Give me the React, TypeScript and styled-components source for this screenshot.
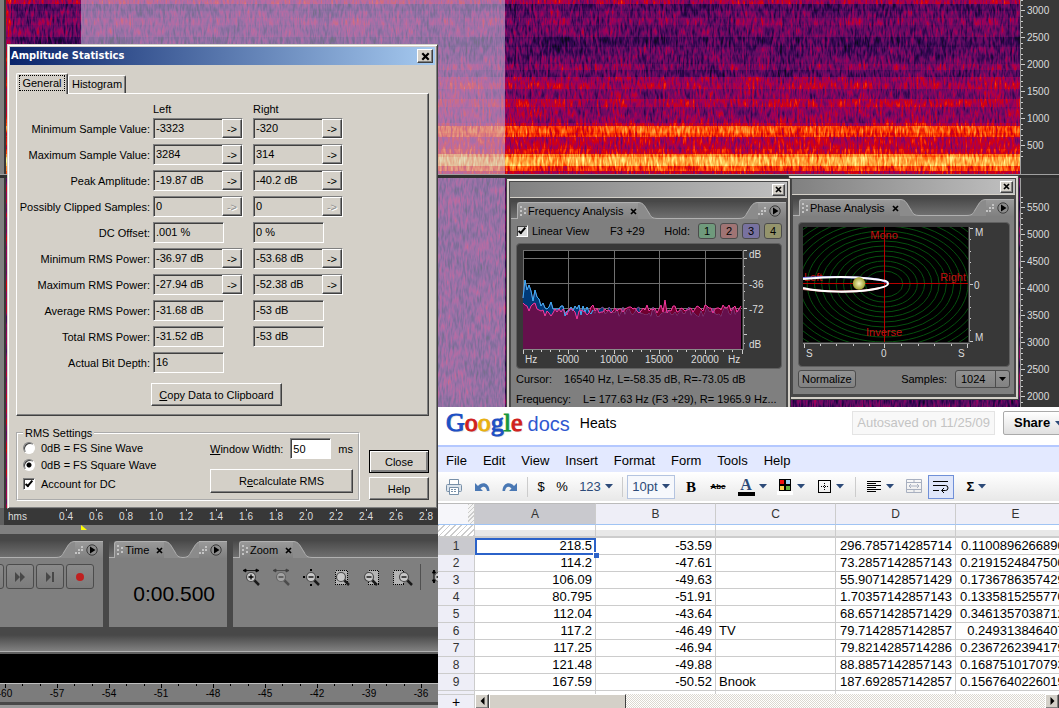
import React from "react";
import styled, { createGlobalStyle, css } from "styled-components";

const Global = createGlobalStyle`
  *, *::before, *::after { box-sizing: border-box; }
  body { margin: 0; background: #484848; font-family: "Liberation Sans", Arial, sans-serif; }
  button, input, select { font: inherit; color: inherit; margin: 0; border-radius: 0; }
`;

const uiFont = css`
  font-family: "Liberation Sans", Arial, sans-serif;
  font-size: 11px;
  line-height: 14px;
`;
const raised = css`
  border: 1px solid;
  border-color: #fff #404040 #404040 #fff;
  box-shadow: inset -1px -1px 0 #808080;
`;
const sunken = css`
  border: 1px solid;
  border-color: #808080 #fff #fff #808080;
  box-shadow: inset 1px 1px 0 #404040;
`;

/* ---------- Audio editor ---------- */

const Desktop = styled.div`
  position: relative;
  height: 100vh;
  overflow: hidden;
  ${uiFont}
`;
const Editor = styled.main`
  display: flex;
  flex-direction: column;
  min-height: 100%;
`;
const Track = styled.section<{ $h: number }>`
  display: flex;
  height: ${(p) => p.$h}px;
  background: #383838;
  border-left: 4px solid #808080;
  padding-left: 2px;
  overflow: hidden;
`;
const Wave = styled.div`
  position: relative;
  flex: 1;
  border-right: 1px solid #a0a0a0;
  svg { display: block; }
`;
const Selection = styled.div`
  position: absolute;
  left: 75px;
  width: 424px;
  top: 0;
  bottom: 0;
  background: rgba(205, 200, 225, 0.54);
`;
const TrackGap = styled.div`
  height: 4px;
  background: #303030;
  border-top: 1px solid #a0a0a0;
`;
const Scale = styled.div<{ $end?: boolean; $pad: number }>`
  display: flex;
  width: 38px;
  flex-direction: column;
  justify-content: ${(p) => (p.$end ? "flex-end" : "flex-start")};
  padding: ${(p) => (p.$end ? `0 0 ${p.$pad}px` : `${p.$pad}px 0 0`)};
  color: #ddd;
`;
const ScaleMark = styled.span`
  display: flex;
  flex: none;
  align-items: center;
  gap: 2px;
  height: 27px;
  font-size: 10px;
`;

function Mark({ value }: { value: number }) {
  return (
    <ScaleMark>
      <svg width="4" height="27" stroke="#ccc" shapeRendering="crispEdges">
        <path d="M0 3.5h2M0 8.5h2M0 13.5h4M0 19.5h2M0 24.5h2" />
      </svg>
      {value}
    </ScaleMark>
  );
}

const TOP_BANDS: [number, number, number][] = [
  [0, 4, 0.42], [4, 7, 0.24], [11, 7, 0.29], [18, 7, 0.34], [25, 6, 0.3], [31, 6, 0.31],
  [37, 10, 0.22], [47, 9, 0.27], [56, 8, 0.29], [64, 6, 0.35], [70, 7, 0.27], [77, 6, 0.4],
  [83, 6, 0.43], [89, 10, 0.34], [99, 8, 0.45], [107, 8, 0.37], [115, 8, 0.38], [123, 3, 0.48],
  [126, 7, 0.69], [133, 4, 0.64], [137, 12, 0.47], [149, 5, 0.53], [154, 3, 0.76], [157, 9, 0.85],
  [166, 5, 0.65], [171, 3, 0.48],
];
const LOW_BANDS: [number, number, number][] = [[0, 220, 0.27], [220, 110, 0.25]];

function Spectrogram({ id, bands, height, seed }: { id: string; bands: [number, number, number][]; height: number; seed: number }) {
  return (
    <svg width="100%" height={height} aria-label="Spectrogram">
      <defs>
        <filter id={id} x="0" y="0" width="100%" height="100%" colorInterpolationFilters="sRGB">
          <feTurbulence type="fractalNoise" baseFrequency="0.47 0.11" numOctaves={2} seed={seed} />
          <feColorMatrix values="1 0 0 0 0  1 0 0 0 0  1 0 0 0 0  0 0 0 0 1" result="grain" />
          <feTurbulence type="fractalNoise" baseFrequency="0.03 0.05" numOctaves={2} seed={seed + 4} />
          <feColorMatrix values="1 0 0 0 0  1 0 0 0 0  1 0 0 0 0  0 0 0 0 1" result="cloud" />
          <feComposite in="SourceGraphic" in2="grain" operator="arithmetic" k2={1} k3={0.54} k4={-0.29} result="a" />
          <feComposite in="a" in2="cloud" operator="arithmetic" k2={1} k3={0.22} k4={-0.13} />
          <feComponentTransfer>
            <feFuncR type="table" tableValues="0.04 0.17 0.38 0.62 0.84 1 1 1 1" />
            <feFuncG type="table" tableValues="0.04 0.02 0.05 0 0 0.25 0.55 0.8 1" />
            <feFuncB type="table" tableValues="0.1 0.3 0.39 0.36 0.05 0 0.16 0.36 0.6" />
          </feComponentTransfer>
        </filter>
      </defs>
      <g filter={`url(#${id})`}>
        {bands.map(([y, h, v]) => (
          <rect key={y} x="0" y={y} width="100%" height={h} fill={`rgb(${v * 255},${v * 255},${v * 255})`} />
        ))}
        <rect x="0" y="0" width="5" height={height} fill="#fff" fillOpacity="0.2" />
      </g>
    </svg>
  );
}

const Ruler = styled.div`
  display: flex;
  height: 17px;
  padding-left: 4px;
  background: #383838;
  border-left: 4px solid #606060;
  color: #ddd;
  font-size: 10px;
  line-height: 18px;
`;
const RulerUnit = styled.span`
  width: 43px;
`;
const RulerCell = styled.span`
  width: 30px;
  text-align: center;
  background: linear-gradient(#ccc, #ccc) 15px 0 / 1px 3px no-repeat;
`;
const CursorStrip = styled.div`
  height: 9px;
  padding-left: 81px;
  background: #808080;
  svg { display: block; }
`;
const Dock = styled.div`
  display: flex;
  gap: 6px;
  padding-top: 7px;
  background: #484848;
`;
const DockPanel = styled.section<{ $w?: number }>`
  display: flex;
  flex-direction: column;
  height: 86px;
  ${(p) => (p.$w ? `width: ${p.$w}px;` : "flex: 1;")}
  background: #7f7f7f;
`;
const Head = styled.header`
  display: flex;
  height: 17px;
  flex: none;
  background: linear-gradient(#4a4a4a, #727272);
`;
const HeadEdge = styled.span<{ $w?: number }>`
  ${(p) => (p.$w ? `width: ${p.$w}px;` : "flex: 1;")}
  border-bottom: 1px solid #b0b0b0;
`;
const Tab = styled.span`
  display: flex;
  align-items: center;
  gap: 1px;
  padding: 0 0 0 2px;
  background: linear-gradient(#999, #808080);
  border-top: 1px solid #b0b0b0;
  border-left: 1px solid #b0b0b0;
  border-top-left-radius: 3px;
  color: #000;
  white-space: nowrap;
`;
const IconButton = styled.button`
  display: flex;
  align-items: center;
  justify-content: center;
  padding: 0;
  border: 0;
  background: none;
`;
const CloseX = styled(IconButton)`
  width: 9px;
  margin-left: 5px;
`;
const MenuTab = styled(Tab)`
  padding: 0 5px 0 0;
  border-left: 0;
  border-radius: 0;
`;

const Grip = () => (
  <svg width="7" height="12" fill="#c4c4c4">
    <path d="M0 1h2v2H0zM0 5h2v2H0zM0 9h2v2H0zM4 3h2v2H4zM4 7h2v2H4z" />
  </svg>
);
const Slope = ({ flip }: { flip?: boolean }) => (
  <svg width="20" height="17">
    <g transform={flip ? "translate(20 0) scale(-1 1)" : undefined}>
      <path d="M0 .5C6 .5 7 5 11 11c2 4 3 5.500 9 5.500V17H0z" fill="#8b8b8b" />
      <path d="M0 .5C6 .5 7 5 11 11c2 4 3 5.500 9 5.500" fill="none" stroke="#b0b0b0" />
    </g>
  </svg>
);
const X = ({ size = 7 }: { size?: number }) => (
  <svg width={size} height={size} viewBox="0 0 7 7" stroke="#000" strokeWidth="1.700">
    <path d="M1 1l5 5M6 1L1 6" />
  </svg>
);

function PanelHead({ title }: { title?: string }) {
  return (
    <Head>
      {title && (
        <>
          <HeadEdge $w={6} />
          <Tab>
            <Grip />
            {title}
            <CloseX aria-label={`Close ${title}`}><X /></CloseX>
          </Tab>
          <Slope />
        </>
      )}
      <HeadEdge />
      <Slope flip />
      <MenuTab>
        <svg width="10" height="9" fill="#c4c4c4">
          <path d="M0 6h2v2H0zM3 3h2v2H3zM3 6h2v2H3zM6 0h2v2H6zM6 3h2v2H6z" />
        </svg>
        <IconButton aria-label="Panel menu">
          <svg width="12" height="12">
            <circle cx="6" cy="6" r="5.200" fill="#8c8c8c" stroke="#3c3c3c" />
            <path d="M4 2.500v7L9.500 6z" fill="#000" />
          </svg>
        </IconButton>
      </MenuTab>
    </Head>
  );
}

const Transport = styled.div`
  display: flex;
  justify-content: flex-end;
  gap: 2px;
  padding: 6px 9px;
`;
const TransportButton = styled.button`
  display: flex;
  width: 28px;
  height: 25px;
  align-items: center;
  justify-content: center;
  flex: none;
  padding: 0;
  border: 1px solid #4c4c4c;
  border-radius: 3px;
  background: linear-gradient(#8a8a8a, #7c7c7c);
`;
const Clock = styled.output`
  display: block;
  padding: 24px 12px 0;
  text-align: right;
  font-size: 21px;
  line-height: 24px;
`;
const ZoomTools = styled.div`
  display: flex;
  gap: 10px;
  padding: 6px 10px;
  overflow: hidden;
`;
const Divider = styled.i`
  width: 1px;
  height: 26px;
  margin-left: -3px;
  background: #505050;
`;

type LensKind = "in" | "out" | "full" | "sel" | "left" | "right" | "vert";
function Lens({ kind }: { kind: LensKind }) {
  const boxes: Partial<Record<LensKind, string>> = { sel: "M2.500 4.500h12v14h-12z", left: "M5.500 4.500h10v14h-10z", right: "M.5 4.500h10v14H.5z" };
  const cx = kind === "left" ? 6 : kind === "right" ? 11 : 8;
  return (
    <svg width="20" height="22" opacity={kind === "out" ? 0.5 : 1}>
      {boxes[kind] && (
        <>
          <path d={boxes[kind]} fill="#b4b4b4" />
          <path d={boxes[kind]} fill="none" stroke="#000" strokeWidth="1.400" strokeDasharray="1 1" shapeRendering="crispEdges" />
        </>
      )}
      {(kind === "in" || kind === "out") && <path d="M0 4.500h16M3 3v3L0 4.500zM13 3v3l3-1.500z" stroke="#000" strokeWidth=".8" fill="#000" />}
      {kind === "vert" && <path d="M3 4v13M1.500 7L3 4l1.500 3zM1.500 14L3 17l1.500-3z" stroke="#000" fill="#000" />}
      {kind === "full" && <path d="M8 3v2M8 18v2M0 11h2M14 11h2" stroke="#000" strokeWidth="2" />}
      <path d={`M${cx + 3} 14l5 5`} stroke="#1a1a1a" strokeWidth="2.500" />
      <circle cx={cx} cy="11" r="4.500" fill="#c8c8c8" stroke="#4a4a4a" strokeWidth="1.200" />
      {kind !== "sel" && <path d={kind === "in" || kind === "vert" ? `M${cx - 2.5} 11h5M${cx} 8.500v5` : `M${cx - 2.5} 11h5`} stroke="#000" strokeWidth="1.300" />}
    </svg>
  );
}

const StatusFade = styled.div`
  height: 27px;
  background: linear-gradient(#484848 30%, #808080 88%, #b0b0b0 88%, #b0b0b0 92%, #606060 92%);
`;
const Meter = styled.div`
  height: 29px;
  background: #000;
`;
const MeterScale = styled.div`
  display: flex;
  height: 19px;
  background: #7c7c7c;
  border-top: 1px solid #c0c0c0;
  overflow: hidden;
  font-size: 10px;
  line-height: 20px;
  &::before { content: ""; flex: none; width: 5px; margin-left: -26px; }
`;
const MeterCell = styled.span`
  flex: none;
  width: 52px;
  text-align: center;
  background:
    linear-gradient(#000, #000) 26px 0 / 1px 4px no-repeat,
    linear-gradient(#000, #000) 9px 0 / 1px 2px no-repeat,
    linear-gradient(#000, #000) 43px 0 / 1px 2px no-repeat;
`;
const Footer = styled.div`
  flex: 1;
  background: #9a9a9a;
  border-top: 3px solid #484848;
`;

/* ---------- Floating analysis windows ---------- */

const FloatWindow = styled.section<{ $x: number; $y: number; $w: number }>`
  position: absolute;
  left: ${(p) => p.$x}px;
  top: ${(p) => p.$y}px;
  width: ${(p) => p.$w}px;
  padding: 1px;
  background: #484848;
  border: 2px solid #d4d0c8;
  border-top-color: #f0eeea;
  outline: 1px solid #404040;
  outline-offset: 0;
`;
const FloatTitle = styled.div`
  display: flex;
  height: 16px;
  align-items: center;
  justify-content: flex-end;
  padding-right: 2px;
  background: linear-gradient(90deg, #808080, #c0c0c0);
  border-bottom: 1px solid #d4d0c8;
`;
const WinClose = styled.button<{ $w: number; $h: number }>`
  display: flex;
  width: ${(p) => p.$w}px;
  height: ${(p) => p.$h}px;
  align-items: center;
  justify-content: center;
  padding: 0;
  background: #d4d0c8;
  ${raised}
`;
const FloatPanel = styled.div`
  margin: 4px 1px 2px;
  background: #7f7f7f;
`;
const FloatBody = styled.div`
  padding: 4px 4px 6px 5px;
`;
const Line = styled.div`
  display: flex;
  align-items: center;
`;
const HoldButton = styled.button<{ $c: string }>`
  width: 18px;
  height: 16px;
  margin-left: 4px;
  padding: 0;
  border: 1px solid #4c4c4c;
  border-radius: 3px;
  background: ${(p) => p.$c};
  line-height: 14px;
`;
const Tick = styled.input`
  appearance: none;
  position: relative;
  width: 12px;
  height: 12px;
  flex: none;
  background: #dcdcdc;
  ${sunken}
  &:checked::after {
    content: "";
    position: absolute;
    left: 3px;
    top: 0;
    width: 4px;
    height: 8px;
    border: solid #000;
    border-width: 0 2px 2px 0;
    transform: rotate(40deg);
  }
`;
const LinearLabel = styled.label`
  display: flex;
  align-items: center;
  gap: 4px;
  width: 94px;
`;
const Note = styled.span`
  flex: 1;
`;
const ChartBox = styled.div`
  height: 126px;
  margin: 4px 0 3px;
  border: 1px solid #606060;
  border-radius: 4px;
  background: #383838;
  svg { display: block; }
`;
const Readout = styled.dl`
  display: flex;
  margin: 0 0 6px;
  dt { flex: none; }
  dd { margin: 0; white-space: nowrap; }
`;
const Gap = styled.span<{ $w: number }>`
  flex: none;
  width: ${(p) => p.$w}px;
`;
const PhaseBox = styled(ChartBox)`
  height: 145px;
  margin: 2px 0 3px;
`;
const Flat = css`
  height: 18px;
  border: 1px solid #4c4c4c;
  border-radius: 3px;
  background: linear-gradient(#929292, #828282);
`;
const FlatButton = styled.button`
  ${Flat}
  padding: 0 3px;
  line-height: 14px;
`;
const SampleLabel = styled.label`
  display: flex;
  align-items: center;
  gap: 8px;
  margin-left: auto;
`;
const SelectWrap = styled.span`
  position: relative;
  display: flex;
  svg { position: absolute; right: 0; top: 0; pointer-events: none; }
`;
const FlatSelect = styled.select`
  ${Flat}
  appearance: none;
  width: 55px;
  padding: 0 5px;
`;

function series(seed: number, count: number, base: (i: number) => number, amp: number) {
  let s = seed;
  return Array.from({ length: count }, (_, i) => {
    s = (s * 16807) % 2147483647;
    return Math.round(base(i) + (s / 2147483647 - 0.5) * amp);
  });
}
const N = 110;
const leftCh = series(77, N, (i) => (i < 21 ? 36 + 24 * Math.pow(i / 20, 0.55) : i > 22 && i < 34 ? 60 : 62), 10).map((v, i) => (i === 0 ? 48 : i === 1 ? 30 : i === 3 ? 35 : i === 6 ? 40 : v));
const rightCh = series(1234, N, (i) => (i < 8 ? 57 : i < 34 ? 62 : 59), 9).map((v, i) => (i === 71 ? 50 : i === 27 ? 69 : v));
const toPath = (ys: number[]) => ys.map((y, i) => `${i ? "L" : "M"}${i * 2} ${y}`).join("");
const toArea = (ys: number[]) => `${toPath(ys)}L${(N - 1) * 2} 99L0 99Z`;

const ChartText = styled.g`
  fill: #ddd;
  font-family: "Liberation Sans", Arial, sans-serif;
  font-size: 10px;
`;

function FrequencyChart() {
  return (
    <svg width="262" height="122" aria-label="Frequency response">
      <g transform="translate(6 6)">
        <rect width="219" height="99" fill="#000" />
        <path d="M0 8.500h219M0 33.500h219M0 58.500h219M45.500 0v99M91.500 0v99M136.500 0v99M182.500 0v99M0 .5h219M.5 0v99" stroke="#707070" shapeRendering="crispEdges" />
        <path d={toArea(leftCh)} fill="#003a78" />
        <path d={toArea(rightCh)} fill="#700030" />
        <path d={toPath(leftCh)} fill="none" stroke="#7c4a88" />
        <path d={toArea(leftCh.map((v, i) => Math.max(v, rightCh[i])))} fill="#65104c" />
        <path d={toPath(leftCh.slice(0, 36))} fill="none" stroke="#38b0f8" />
        <path d={toPath(rightCh)} fill="none" stroke="#f838a0" />
        <path d="M0 99.500h220.500V0" fill="none" stroke="#888" />
        <path
          d="M.5 100v4M45.500 100v4M91.500 100v4M136.500 100v4M182.500 100v4M219.500 100v4M9.500 100v2M18.500 100v2M27.500 100v2M36.500 100v2M54.500 100v2M63.500 100v2M72.500 100v2M82.500 100v2M100.500 100v2M109.500 100v2M118.500 100v2M127.500 100v2M145.500 100v2M154.500 100v2M163.500 100v2M172.500 100v2M191.500 100v2M200.500 100v2M209.500 100v2M221 .5h3M221 8.500h3M221 33.500h3M221 58.500h3M221 84.500h3M221 16.500h1M221 25.500h1M221 41.500h1M221 50.500h1M221 67.500h1M221 75.500h1M221 93.500h1"
          stroke="#ccc"
          shapeRendering="crispEdges"
        />
      </g>
      <ChartText>
        <text x="232" y="14">dB</text>
        <text x="232" y="44">-36</text>
        <text x="232" y="69">-72</text>
        <text x="232" y="104">dB</text>
        <text x="8" y="119">Hz</text>
        <g textAnchor="middle">
          <text x="51" y="119">5000</text>
          <text x="97" y="119">10000</text>
          <text x="142" y="119">15000</text>
          <text x="188" y="119">20000</text>
        </g>
        <text x="211" y="119">Hz</text>
      </ChartText>
    </svg>
  );
}

function PhaseChart() {
  const rings = Array.from({ length: 22 }, (_, k) => 13 + k * 5);
  return (
    <svg width="207" height="142" aria-label="Phase plot">
      <defs>
        <clipPath id="plot"><rect width="165" height="115" /></clipPath>
        <radialGradient id="ball"><stop offset="0" stopColor="#f4f4c0" /><stop offset="1" stopColor="#a0a030" /></radialGradient>
      </defs>
      <g transform="translate(4 4)">
        <g clipPath="url(#plot)">
          <rect width="165" height="115" fill="#000" />
          {rings.map((r) => (
            <ellipse key={r} cx="81" cy="57" rx={r * 1.45} ry={r} fill="none" stroke="#06500e" strokeWidth="1" />
          ))}
          <path d="M81.500 0v115M0 56.500h165" stroke="#b80000" shapeRendering="crispEdges" />
          <g fill="#c01010" fontSize="11" fontFamily="Liberation Sans, Arial, sans-serif">
            <text x="81" y="12" textAnchor="middle">Mono</text>
            <text x="81" y="109" textAnchor="middle">Inverse</text>
            <text x="1" y="54">Left</text>
            <text x="163" y="54" textAnchor="end">Right</text>
          </g>
          <path d="M0 51C34 49 80 50 85 56.500" fill="none" stroke="#7878f0" strokeWidth="2" />
          <path d="M0 62C30 66 60 65 76 61" fill="none" stroke="#e08080" strokeWidth="2" />
          <path d="M0 52C30 49 56 50 70 52S85 54 85 56.500 80 61 66 63 20 66 0 61" fill="none" stroke="#fff" strokeWidth="2" />
          <circle cx="56" cy="56.500" r="6.200" fill="url(#ball)" />
        </g>
        <path d="M0 116.500h166.500M166.500 0v115" stroke="#888" fill="none" />
        <path
          d="M1.500 117v4M17.500 117v2M33.500 117v2M50.500 117v2M66.500 117v2M81.500 117v4M98.500 117v2M115.500 117v2M131.500 117v2M148.500 117v2M164.500 117v4M167 1.500h3M167 12.500h1M167 24.500h1M167 35.500h1M167 46.500h1M167 57.500h3M167 69.500h1M167 80.500h1M167 91.500h1M167 103.500h1M167 114.500h3"
          stroke="#ccc"
          shapeRendering="crispEdges"
        />
      </g>
      <ChartText>
        <text x="176" y="13">M</text>
        <text x="175" y="66">0</text>
        <text x="176" y="118">M</text>
        <text x="7" y="134">S</text>
        <text x="82" y="134">0</text>
        <text x="159" y="134">S</text>
      </ChartText>
    </svg>
  );
}

function PhaseWindow() {
  return (
    <FloatWindow $x={789} $y={176} $w={229}>
      <FloatTitle><WinClose $w={13} $h={12} aria-label="Close window"><X /></WinClose></FloatTitle>
      <FloatPanel>
        <PanelHead title="Phase Analysis" />
        <FloatBody>
          <PhaseBox><PhaseChart /></PhaseBox>
          <Line>
            <FlatButton>Normalize</FlatButton>
            <SampleLabel>
              Samples:
              <SelectWrap>
                <FlatSelect defaultValue="1024"><option>1024</option></FlatSelect>
                <svg width="15" height="18"><path d="M.5 1v16" stroke="#4c4c4c" /><path d="M4 7h7l-3.500 4z" /></svg>
              </SelectWrap>
            </SampleLabel>
          </Line>
        </FloatBody>
      </FloatPanel>
    </FloatWindow>
  );
}

function FrequencyWindow() {
  return (
    <FloatWindow $x={507} $y={179} $w={283}>
      <FloatTitle><WinClose $w={13} $h={12} aria-label="Close window"><X /></WinClose></FloatTitle>
      <FloatPanel>
        <PanelHead title="Frequency Analysis" />
        <FloatBody>
          <Line>
            <LinearLabel><Tick type="checkbox" defaultChecked />Linear View</LinearLabel>
            <Note>F3 +29</Note>
            <span>Hold:</span>
            <Gap $w={4} />
            <HoldButton $c="#6f9a7c">1</HoldButton>
            <HoldButton $c="#a07474">2</HoldButton>
            <HoldButton $c="#7872a0">3</HoldButton>
            <HoldButton $c="#94946c">4</HoldButton>
          </Line>
          <ChartBox><FrequencyChart /></ChartBox>
          <Readout><dt>Cursor:</dt><Gap $w={12} /><dd>16540 Hz, L=-58.35 dB, R=-73.05 dB</dd></Readout>
          <Readout><dt>Frequency:</dt><Gap $w={12} /><dd>L= 177.63 Hz (F3 +29), R= 1965.9 Hz...</dd></Readout>
        </FloatBody>
      </FloatPanel>
    </FloatWindow>
  );
}

/* ---------- Amplitude statistics dialog ---------- */

const Dialog = styled.section`
  position: absolute;
  left: 7px;
  top: 44px;
  width: 431px;
  padding: 2px;
  background: #d4d0c8;
  border: 1px solid;
  border-color: #d4d0c8 #404040 #404040 #d4d0c8;
  box-shadow: inset 1px 1px 0 #fff, inset -1px -1px 0 #808080;
  color: #000;
`;
const DialogTitle = styled.header`
  display: flex;
  height: 18px;
  align-items: center;
  justify-content: space-between;
  padding: 0 2px 0 1px;
  background: linear-gradient(90deg, #0a246a, #a6caf0);
  color: #fff;
  font-family: "DejaVu Sans Condensed", "DejaVu Sans", sans-serif;
  font-weight: bold;
`;
const DialogBody = styled.div`
  padding: 8px 6px 5px 6px;
`;
const Tabs = styled.div`
  display: flex;
  align-items: flex-end;
  height: 20px;
`;
const DialogTab = styled.button<{ $on?: boolean }>`
  position: relative;
  height: ${(p) => (p.$on ? 21 : 18)}px;
  width: ${(p) => (p.$on ? 52 : 58)}px;
  margin-bottom: ${(p) => (p.$on ? -1 : 0)}px;
  padding: 0 0 2px;
  background: #d4d0c8;
  border: 1px solid;
  border-color: #fff #404040 transparent #fff;
  border-bottom: 0;
  border-radius: 2px 2px 0 0;
  box-shadow: inset -1px 0 0 #808080;
  z-index: 1;
  ${(p) => p.$on && "span { display: block; margin: 0 2px; border: 1px dotted #000; line-height: 14px; }"}
`;
const TabPage = styled.div`
  padding: 8px 0 9px 0;
  ${raised}
`;
const StatRow = styled.div`
  display: grid;
  grid-template-columns: 136px 100px 90px;
  align-items: start;
  margin-bottom: 5px;
`;
const StatLabel = styled.label`
  padding: 4px 3px 0 0;
  text-align: right;
  white-space: nowrap;
`;
const StatHead = styled(StatRow)`
  margin-bottom: 2px;
`;
const FieldFrame = styled.div<{ $arrow: boolean }>`
  display: flex;
  width: ${(p) => (p.$arrow ? 90 : 71)}px;
  height: 21px;
  ${sunken}
`;
const Field = styled.input`
  flex: 1;
  min-width: 0;
  padding: 0 2px 2px;
  border: 0;
  background: transparent;
`;
const PushButton = styled.button`
  padding: 0;
  background: #d4d0c8;
  ${raised}
  &:disabled { color: #909090; text-shadow: 1px 1px 0 #fff; }
`;
const ArrowButton = styled(PushButton)`
  width: 20px;
  line-height: 12px;
`;
const CopyButton = styled(PushButton)`
  display: block;
  width: 131px;
  height: 23px;
  margin: 10px 0 0 134px;
`;
const Bottom = styled.div`
  display: flex;
  gap: 9px;
  margin-top: 10px;
`;
const Group = styled.fieldset`
  display: grid;
  grid-template-columns: 1fr 143px;
  flex: 1;
  min-width: 0;
  margin: 0;
  padding: 0 5px 6px;
  border: 2px groove #fff;
  legend { padding: 0 2px; }
`;
const Choices = styled.div`
  display: flex;
  flex-direction: column;
  gap: 1px;
`;
const Choice = styled.label<{ $gap?: number }>`
  display: flex;
  height: 16px;
  align-items: center;
  gap: 6px;
  margin-top: ${(p) => p.$gap || 0}px;
`;
const Radio = styled.input`
  appearance: none;
  width: 12px;
  height: 12px;
  flex: none;
  border: 1px solid;
  border-color: #808080 #fff #fff #808080;
  border-radius: 50%;
  background: #fff;
  box-shadow: inset 1px 1px 0 #404040;
  &:checked { background: radial-gradient(circle at 50% 50%, #000 2px, #fff 3px); }
`;
const WhiteTick = styled(Tick)`
  background: #fff;
`;
const WidthLine = styled.label`
  display: flex;
  align-items: center;
  margin-top: -2px;
  white-space: nowrap;
`;
const WidthInput = styled.input`
  width: 41px;
  height: 21px;
  margin: 0 7px 0 auto;
  padding: 0 2px;
  background: #fff;
  ${sunken}
`;
const Recalc = styled(PushButton)`
  width: 100%;
  height: 24px;
  margin-top: 10px;
`;
const Actions = styled.div`
  display: flex;
  flex-direction: column;
  width: 60px;
  gap: 4px;
  padding-top: 24px;
  button { height: 23px; }
`;
const DefaultButton = styled(PushButton)`
  outline: 1px solid #000;
  outline-offset: -1px;
  box-shadow: inset 1px 1px 0 #fff, inset -2px -2px 0 #808080;
`;

type Stat = [string, string, string, "on" | "off" | ""];
const STATS: Stat[] = [
  ["Minimum Sample Value:", "-3323", "-320", "on"],
  ["Maximum Sample Value:", "3284", "314", "on"],
  ["Peak Amplitude:", "-19.87 dB", "-40.2 dB", "on"],
  ["Possibly Clipped Samples:", "0", "0", "off"],
  ["DC Offset:", ".001 %", "0 %", ""],
  ["Minimum RMS Power:", "-36.97 dB", "-53.68 dB", "on"],
  ["Maximum RMS Power:", "-27.94 dB", "-52.38 dB", "on"],
  ["Average RMS Power:", "-31.68 dB", "-53 dB", ""],
  ["Total RMS Power:", "-31.52 dB", "-53 dB", ""],
  ["Actual Bit Depth:", "16", "", ""],
];

function StatField({ id, label, value, arrow }: { id?: string; label: string; value: string; arrow: Stat[3] }) {
  return (
    <FieldFrame $arrow={arrow !== ""}>
      <Field id={id} aria-label={label} defaultValue={value} readOnly />
      {arrow && <ArrowButton disabled={arrow === "off"} aria-label={`Go to ${label}`}>-&gt;</ArrowButton>}
    </FieldFrame>
  );
}

function AmplitudeDialog() {
  return (
    <Dialog role="dialog" aria-label="Amplitude Statistics">
      <DialogTitle>
        Amplitude Statistics
        <WinClose $w={16} $h={14} aria-label="Close"><X size={9} /></WinClose>
      </DialogTitle>
      <DialogBody>
        <Tabs role="tablist">
          <DialogTab $on role="tab"><span>General</span></DialogTab>
          <DialogTab role="tab">Histogram</DialogTab>
        </Tabs>
        <TabPage>
          <StatHead><span /><span>Left</span><span>Right</span></StatHead>
          {STATS.map(([label, l, r, arrow], i) => (
            <StatRow key={label}>
              <StatLabel htmlFor={`stat-${i}`}>{label}</StatLabel>
              <StatField id={`stat-${i}`} label={`${label} left`} value={l} arrow={arrow} />
              {r && <StatField label={`${label} right`} value={r} arrow={arrow} />}
            </StatRow>
          ))}
          <CopyButton><u>C</u>opy Data to Clipboard</CopyButton>
        </TabPage>
        <Bottom>
          <Group>
            <legend>RMS Settings</legend>
            <Choices>
              <Choice><Radio type="radio" name="ref" />0dB = FS Sine Wave</Choice>
              <Choice><Radio type="radio" name="ref" defaultChecked />0dB = FS Square Wave</Choice>
              <Choice $gap={2}><WhiteTick type="checkbox" defaultChecked />Account for DC</Choice>
            </Choices>
            <div>
              <WidthLine><span><u>W</u>indow Width:</span><WidthInput defaultValue="50" />ms</WidthLine>
              <Recalc>R<u>e</u>calculate RMS</Recalc>
            </div>
          </Group>
          <Actions>
            <DefaultButton>Close</DefaultButton>
            <PushButton>Help</PushButton>
          </Actions>
        </Bottom>
      </DialogBody>
    </Dialog>
  );
}

/* ---------- Spreadsheet ---------- */

const Docs = styled.section`
  position: absolute;
  left: 438px;
  right: 0;
  top: 407px;
  bottom: 0;
  display: flex;
  flex-direction: column;
  overflow: hidden;
  background: #fff;
  color: #000;
  font-size: 13px;
  line-height: 16px;
`;
const DocsTop = styled.header`
  display: flex;
  flex: none;
  height: 38px;
  padding: 0 0 6px 8px;
  align-items: center;
`;
const Logo = styled.a`
  display: flex;
  align-items: baseline;
  text-decoration: none;
  font: 26px/30px "Liberation Serif", serif;
`;
const LogoLetter = styled.span<{ $c: string }>`
  color: ${(p) => p.$c};
  -webkit-text-stroke: 1px ${(p) => p.$c};
  text-shadow: 1px 1px 1px #ccc;
`;
const LogoDocs = styled.span`
  margin-left: 5px;
  color: #3058d0;
  font: 20px/30px "Liberation Sans", Arial, sans-serif;
`;
const DocName = styled.h1`
  flex: 1;
  margin: 0 0 0 10px;
  font-size: 14px;
  font-weight: normal;
`;
const DocsButton = styled.button`
  flex: none;
  height: 24px;
  padding: 0 4px;
  border: 1px solid #e4e4e4;
  background: #f8f8f8;
  color: #c4c4c4;
`;
const ShareButton = styled(DocsButton)`
  display: flex;
  width: 72px;
  align-items: center;
  gap: 5px;
  margin: 0 -16px 0 8px;
  padding: 0 10px;
  border: 1px solid #aaa;
  border-radius: 2px;
  background: linear-gradient(#fff, #e0e0e0);
  color: #000;
  font-weight: bold;
`;
const MenuBar = styled.nav`
  display: flex;
  flex: none;
  gap: 16px;
  height: 27px;
  align-items: center;
  padding: 2px 0 0 8px;
  background: #e3e9ff;
  border-top: 2px solid #b4c8ff;
  a { color: #000; text-decoration: none; }
`;
const Toolbar = styled.div`
  display: flex;
  flex: none;
  height: 29px;
  align-items: center;
  padding-left: 2px;
  background: linear-gradient(#fff, #e8e8e8);
`;
const Tool = styled.button<{ $w: number; $on?: boolean }>`
  display: flex;
  flex: none;
  width: ${(p) => p.$w}px;
  height: 24px;
  align-items: center;
  justify-content: center;
  gap: 4px;
  padding: 0;
  border: 1px solid ${(p) => (p.$on ? "#7090d8" : "transparent")};
  background: ${(p) => (p.$on ? "#dfe6fa" : "none")};
`;
const SizeBox = styled(Tool)`
  border-color: #b4c4e0;
  background: #f6f8fc;
  color: #2c4a78;
  margin-right: 4px;
`;
const Blue = styled.span`
  color: #2c4a78;
`;
const Bold = styled.b`
  font: 900 15px/18px "Liberation Serif", serif;
`;
const Strike = styled.s`
  font: bold 8px/10px "Liberation Sans", Arial, sans-serif;
`;
const ColorLetter = styled.b`
  width: 17px;
  border-bottom: 4px solid #000;
  color: #2c4a78;
  font: bold 16px/14px "Liberation Serif", serif;
`;
const Sep = styled.i`
  flex: none;
  width: 1px;
  height: 20px;
  margin: 0 4px;
  background: #ccc;
`;
const Sheet = styled.div`
  flex: 1;
  min-height: 0;
  margin-top: 2px;
  overflow: hidden;
`;
const Grid = styled.table`
  width: 638px;
  table-layout: fixed;
  border-collapse: separate;
  border-spacing: 0;
  th, td {
    height: 17px;
    padding: 0 3px;
    border: solid #ccc;
    border-width: 0 1px 1px 0;
    line-height: 16px;
    white-space: nowrap;
  }
  th { padding: 0; background: #eeeef7; color: #333; font-weight: normal; font-size: 12px; }
  thead th { height: 22px; border-top: 1px solid #bbb; border-bottom-color: #a0c4f4; }
  thead th.on, tbody th.on { background: #c9c9ce; }
`;
const Corner = styled.th`
  && { background: repeating-linear-gradient(135deg, #ccc 0 1px, #f4f4f4 1px 3px) right / 6px 100% no-repeat, #f6f6fa; }
`;
const FreezeCell = styled.td<{ $hatch?: boolean }>`
  && {
    height: 13px;
    border-bottom: 2px solid #ccc;
    background: ${(p) => (p.$hatch ? "repeating-linear-gradient(135deg, #ccc 0 1px, #fff 1px 4px)" : "linear-gradient(#fff 45%, #e8e8e8 45%)")};
  }
`;
const Cell = styled.td<{ $left?: boolean; $sel?: boolean }>`
  text-align: ${(p) => (p.$left ? "left" : "right")};
  ${(p) => p.$sel && css`
    position: relative;
    outline: 2px solid #2b62c9;
    outline-offset: -2px;
    &::after {
      content: "";
      position: absolute;
      right: -4px;
      bottom: -4px;
      width: 6px;
      height: 6px;
      background: #2b62c9;
      border: 1px solid #fff;
      border-width: 1px 0 0 1px;
    }
  `}
`;
const ScrollRow = styled.div`
  display: flex;
  flex: none;
  height: 14px;
  background: repeating-conic-gradient(#fff 0 25%, #dcd8d0 0 50%) 0 0 / 2px 2px;
`;
const AddRows = styled.button`
  width: 37px;
  padding: 0;
  border: solid #ccc;
  border-width: 1px 1px 0 0;
  background: #eeeef7;
  font-size: 14px;
  line-height: 14px;
`;
const ScrollButton = styled.button`
  width: 14px;
  padding: 0;
  background: #d4d0c8;
  ${raised}
  border-bottom: 0;
  svg { display: block; margin: auto; }
`;
const Thumb = styled.div`
  width: 137px;
  background: #d4d0c8;
  border: 1px solid;
  border-color: #fff #404040 #404040 #fff;
  border-bottom: 0;
`;
const TrackSpace = styled.span`
  flex: 1;
`;

const Caret = () => <svg width="8" height="5"><path d="M0 0h8L4 4.500z" fill="#2c4a78" /></svg>;
const Arc = ({ flip }: { flip?: boolean }) => (
  <svg width="15" height="12">
    <path
      d="M0 2v8h8L5.500 7.500C8 5 11 5 12 10h2.500C14.500 2 7 0 3 5z"
      fill="#4a78b4"
      transform={flip ? "translate(15 0) scale(-1 1)" : undefined}
    />
  </svg>
);

const ROWS: string[][] = [
  ["218.5", "-53.59", "", "296.785714285714", "0.11008962668906"],
  ["114.2", "-47.61", "", "73.2857142857143", "0.21915248475006"],
  ["106.09", "-49.63", "", "55.9071428571429", "0.17367863574296"],
  ["80.795", "-51.91", "", "1.70357142857143", "0.13358152557706"],
  ["112.04", "-43.64", "", "68.6571428571429", "0.34613570387126"],
  ["117.2", "-46.49", "TV", "79.7142857142857", "0.2493138464076"],
  ["117.25", "-46.94", "", "79.8214285714286", "0.23672623941796"],
  ["121.48", "-49.88", "", "88.8857142857143", "0.16875101707936"],
  ["167.59", "-50.52", "Bnook", "187.692857142857", "0.15676402260196"],
  ["", "", "", "", ""],
];

function Spreadsheet() {
  return (
    <Docs>
      <DocsTop>
        <Logo href="#docs">
          <LogoLetter $c="#1d4fc4">G</LogoLetter>
          <LogoLetter $c="#d0201c">o</LogoLetter>
          <LogoLetter $c="#e8b010">o</LogoLetter>
          <LogoLetter $c="#1d4fc4">g</LogoLetter>
          <LogoLetter $c="#18983c">l</LogoLetter>
          <LogoLetter $c="#d0201c">e</LogoLetter>
          <LogoDocs>docs</LogoDocs>
        </Logo>
        <DocName>Heats</DocName>
        <DocsButton disabled>Autosaved on 11/25/09</DocsButton>
        <ShareButton>Share<Caret /></ShareButton>
      </DocsTop>
      <MenuBar>
        {["File", "Edit", "View", "Insert", "Format", "Form", "Tools", "Help"].map((m) => (
          <a key={m} href={`#${m}`}>{m}</a>
        ))}
      </MenuBar>
      <Toolbar>
        <Tool $w={28} aria-label="Print">
          <svg width="16" height="16" fill="#fff" stroke="#7890a8">
            <path d="M3.500 5V.5h9V5" />
            <rect x=".5" y="5.500" width="15" height="7" rx="1" fill="#dce4ec" />
            <path d="M3.500 8.500h9v7h-9z" />
            <path d="M5 10.500h6M5 12.500h6" strokeDasharray="2 1" />
          </svg>
        </Tool>
        <Tool $w={28} aria-label="Undo"><Arc /></Tool>
        <Tool $w={27} aria-label="Redo"><Arc flip /></Tool>
        <Sep />
        <Tool $w={18}>$</Tool>
        <Tool $w={24}>%</Tool>
        <Tool $w={44}><Blue>123</Blue><Caret /></Tool>
        <Sep />
        <SizeBox $w={48}>10pt<Caret /></SizeBox>
        <Tool $w={24} aria-label="Bold"><Bold>B</Bold></Tool>
        <Tool $w={30} aria-label="Strikethrough"><Strike>Abc</Strike></Tool>
        <Tool $w={38} aria-label="Text color"><ColorLetter>A</ColorLetter><Caret /></Tool>
        <Tool $w={40} aria-label="Background color">
          <svg width="16" height="18">
            <path d="M0 13h16v4H0z" fill="#fff" />
            <path d="M2 1h12v12H2z" />
            <path d="M3 2h4v4H3z" fill="#f01010" />
            <path d="M9 2h4v4H9z" fill="#a0d0f0" />
            <path d="M3 8h4v4H3z" fill="#f8d050" />
            <path d="M9 8h4v4H9z" fill="#60b040" />
          </svg>
          <Caret />
        </Tool>
        <Tool $w={40} aria-label="Borders">
          <svg width="14" height="14" fill="none" stroke="#000" shapeRendering="crispEdges">
            <rect x=".5" y=".5" width="12" height="12" />
            <path d="M6.500 3v8M3 6.500h8" strokeDasharray="1 1" />
          </svg>
          <Caret />
        </Tool>
        <Sep />
        <Tool $w={40} aria-label="Align">
          <svg width="15" height="12" stroke="#000" shapeRendering="crispEdges"><path d="M0 .5h14M0 2.500h9M0 4.500h14M0 6.500h9M0 8.500h14M0 10.500h9" /></svg>
          <Caret />
        </Tool>
        <Tool $w={28} aria-label="Merge">
          <svg width="17" height="15" fill="none" stroke="#a8b0c0"><path d="M.5.5h15v13H.5zM.5 3.500h15M.5 10.500h15M8 1v2M8 11v2M3 7h10M5 5L3 7l2 2M11 5l2 2-2 2" /></svg>
        </Tool>
        <Tool $w={26} $on aria-label="Wrap text">
          <svg width="18" height="13" fill="none" stroke="#000"><path d="M1 1.500h15M1 5.500h12.500a2.500 2.500 0 010 5H10M1 10.500h6M12 8l-2.500 2.500L12 13" /></svg>
        </Tool>
        <Tool $w={45} aria-label="Functions"><b>Σ</b><Caret /></Tool>
      </Toolbar>
      <Sheet>
        <Grid>
          <colgroup>
            <col style={{ width: 37 }} />
            <col style={{ width: 121 }} />
            {ROWS[0].slice(1).map((_, i) => <col key={i} />)}
          </colgroup>
          <thead>
            <tr>
              <Corner />
              {["A", "B", "C", "D", "E"].map((c) => <th key={c} className={c === "A" ? "on" : ""}>{c}</th>)}
            </tr>
          </thead>
          <tbody>
            <tr>
              <FreezeCell $hatch />
              {ROWS[0].map((_, i) => <FreezeCell key={i} />)}
            </tr>
            {ROWS.map((row, r) => (
              <tr key={r}>
                <th className={r === 0 ? "on" : ""}>{row[0] ? r + 1 : ""}</th>
                {row.map((v, c) => <Cell key={c} $left={c === 2} $sel={r === 0 && c === 0}>{v}</Cell>)}
              </tr>
            ))}
          </tbody>
        </Grid>
      </Sheet>
      <ScrollRow>
        <AddRows aria-label="Add rows">+</AddRows>
        <ScrollButton aria-label="Scroll left"><svg width="5" height="9"><path d="M4.500 0v8L.5 4z" /></svg></ScrollButton>
        <Thumb />
        <TrackSpace />
        <ScrollButton aria-label="Scroll right"><svg width="5" height="9"><path d="M.5 0v8l4-4z" /></svg></ScrollButton>
      </ScrollRow>
    </Docs>
  );
}

export default function App() {
  return (
    <Desktop>
      <Global />
      <Editor>
        <Track $h={174}>
          <Wave><Spectrogram id="upper" bands={TOP_BANDS} height={174} seed={3} /><Selection /></Wave>
          <Scale $end $pad={15}>{[3000, 2500, 2000, 1500, 1000, 500].map((v) => <Mark key={v} value={v} />)}</Scale>
        </Track>
        <TrackGap />
        <Track $h={330}>
          <Wave><Spectrogram id="lower" bands={LOW_BANDS} height={330} seed={9} /><Selection /></Wave>
          <Scale $pad={16}>{[5500, 5000, 4500, 4000, 3500, 3000, 2500, 2000].map((v) => <Mark key={v} value={v} />)}</Scale>
        </Track>
        <Ruler>
          <RulerUnit>hms</RulerUnit>
          {["0.4", "0.6", "0.8", "1.0", "1.2", "1.4", "1.6", "1.8", "2.0", "2.2", "2.4", "2.6", "2.8"].map((t) => <RulerCell key={t}>{t}</RulerCell>)}
        </Ruler>
        <CursorStrip><svg width="6" height="6"><path d="M0 0l6 5H0z" fill="#ff0" /></svg></CursorStrip>
        <Dock>
          <DockPanel $w={103}>
            <PanelHead />
            <Transport>
              <TransportButton aria-label="Rewind" />
              <TransportButton aria-label="Fast forward"><svg width="12" height="10" fill="#484848"><path d="M1 0l5 5-5 5zM6 0l5 5-5 5z" /></svg></TransportButton>
              <TransportButton aria-label="Go to end"><svg width="10" height="10" fill="#484848"><path d="M1 0l5 5-5 5zM7 0h2v10H7z" /></svg></TransportButton>
              <TransportButton aria-label="Record"><svg width="8" height="8"><circle cx="4" cy="4" r="4" fill="#c02020" /></svg></TransportButton>
            </Transport>
          </DockPanel>
          <DockPanel $w={118}>
            <PanelHead title="Time" />
            <Clock>0:00.500</Clock>
          </DockPanel>
          <DockPanel>
            <PanelHead title="Zoom" />
            <ZoomTools>
              {(["in", "out", "full", "sel", "left", "right"] as LensKind[]).map((k) => (
                <IconButton key={k} aria-label={`Zoom ${k}`}><Lens kind={k} /></IconButton>
              ))}
              <Divider />
              <IconButton aria-label="Zoom in vertically"><Lens kind="vert" /></IconButton>
            </ZoomTools>
          </DockPanel>
        </Dock>
        <StatusFade />
        <Meter />
        <MeterScale>
          {[-60, -57, -54, -51, -48, -45, -42, -39, -36].map((v) => <MeterCell key={v}>{v}</MeterCell>)}
        </MeterScale>
        <Footer />
      </Editor>
      <PhaseWindow />
      <FrequencyWindow />
      <AmplitudeDialog />
      <Spreadsheet />
    </Desktop>
  );
}
